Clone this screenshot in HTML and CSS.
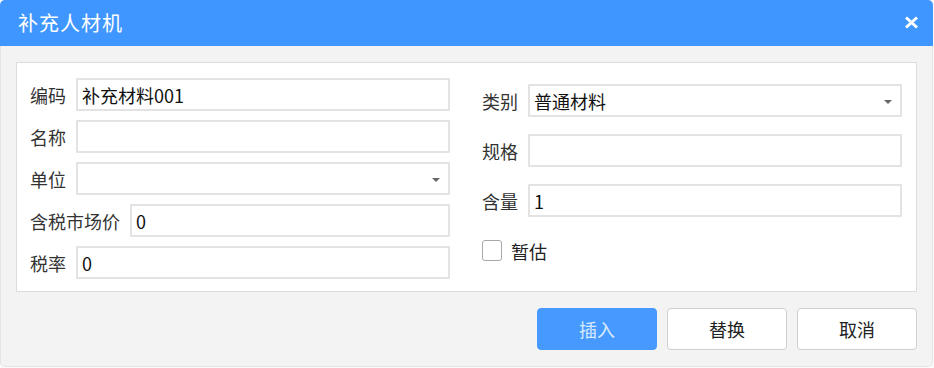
FILE: index.html
```html
<!DOCTYPE html>
<html lang="zh-CN">
<head>
<meta charset="utf-8">
<title>补充人材机</title>
<link rel="stylesheet" href="styles.css">
</head>
<body>
<div class="dialog">
  <div class="dialog-header">
    <span class="dialog-title">补充人材机</span>
    <span class="close-btn">
      <svg width="15" height="13" viewBox="0 0 15 13"><path d="M2 1.5 L13 11.5 M13 1.5 L2 11.5" stroke="#fff" stroke-width="3" stroke-linecap="butt"/></svg>
    </span>
  </div>
  <div class="dialog-body">
    <div class="panel">
      <div class="col col-left">
        <div class="row"><span class="label">编码</span><div class="input">补充材料001</div></div>
        <div class="row"><span class="label">名称</span><div class="input"></div></div>
        <div class="row"><span class="label">单位</span><div class="input select"><span class="caret"></span></div></div>
        <div class="row"><span class="label">含税市场价</span><div class="input">0</div></div>
        <div class="row"><span class="label">税率</span><div class="input">0</div></div>
      </div>
      <div class="col col-right">
        <div class="row"><span class="label">类别</span><div class="input select">普通材料<span class="caret"></span></div></div>
        <div class="row"><span class="label">规格</span><div class="input"></div></div>
        <div class="row"><span class="label">含量</span><div class="input">1</div></div>
        <div class="row check-row"><span class="checkbox"></span><span class="check-label">暂估</span></div>
      </div>
    </div>
    <div class="footer">
      <button class="btn btn-primary">插入</button>
      <button class="btn">替换</button>
      <button class="btn">取消</button>
    </div>
  </div>
</div>
</body>
</html>
```

FILE: styles.css
```css
* { box-sizing: border-box; }
html, body { margin: 0; padding: 0; }
body {
  width: 934px;
  height: 368px;
  background: #fbfbfb;
  font-family: "Noto Sans CJK SC", "Noto Sans", sans-serif;
  overflow: hidden;
}
.dialog {
  width: 933px;
  height: 367px;
  border-radius: 5px;
  overflow: hidden;
  background: #f3f3f3;
  display: flex;
  flex-direction: column;
}
.dialog-header {
  height: 46px;
  flex: none;
  background: #4096ff;
  color: #fff;
  display: flex;
  align-items: center;
  justify-content: space-between;
  padding: 0 14px 0 18px;
}
.dialog-title {
  font-size: 20px;
  letter-spacing: 1px;
  line-height: 1;
  margin-top: -1px;
}
.close-btn {
  display: flex;
  width: 15px;
  height: 13px;
  margin-top: -1px;
}
.dialog-body {
  flex: 1;
  display: flex;
  flex-direction: column;
  padding: 16px 15px 0 15px;
  border: 1px solid #e4e4e4;
  border-top: none;
  border-radius: 0 0 5px 5px;
}
.panel {
  height: 230px;
  background: #fff;
  border: 1px solid #dcdcdc;
  display: grid;
  grid-template-columns: 420px 420px;
  column-gap: 32px;
  padding: 15px 14px 0 13px;
}
.col {
  display: flex;
  flex-direction: column;
}
.col-left { row-gap: 9px; }
.col-right { row-gap: 17px; padding-top: 6px; }
.row {
  display: flex;
  align-items: center;
  height: 33px;
}
.label {
  font-size: 18px;
  color: #333;
  margin-right: 10px;
  white-space: nowrap;
  line-height: 1;
}
.input {
  flex: 1;
  height: 33px;
  border: 2px solid #e3e3e3;
  border-radius: 1px;
  font-size: 18px;
  color: #111;
  display: flex;
  align-items: center;
  padding: 0 4px;
  position: relative;
  line-height: 1;
}
.caret {
  position: absolute;
  right: 8px;
  top: 14px;
  width: 0;
  height: 0;
  border-left: 4.5px solid transparent;
  border-right: 4.5px solid transparent;
  border-top: 4px solid #666;
}
.check-row { height: 33px; }
.checkbox {
  width: 20px;
  height: 21px;
  border: 1.5px solid #a8a8a8;
  border-radius: 3px;
  background: #fff;
  margin-right: 9px;
}
.check-label {
  font-size: 18px;
  color: #222;
  line-height: 1;
}
.footer {
  display: flex;
  justify-content: flex-end;
  gap: 10px;
  margin-top: 16px;
}
.btn {
  width: 120px;
  height: 42px;
  border: 1.5px solid #cfcfcf;
  border-radius: 4px;
  background: #fff;
  font-family: "Noto Sans CJK SC", sans-serif;
  font-size: 18px;
  color: #222;
  padding: 0;
}
.btn-primary {
  background: #4599ff;
  border-color: #4599ff;
  color: #d9eaff;
}
```
